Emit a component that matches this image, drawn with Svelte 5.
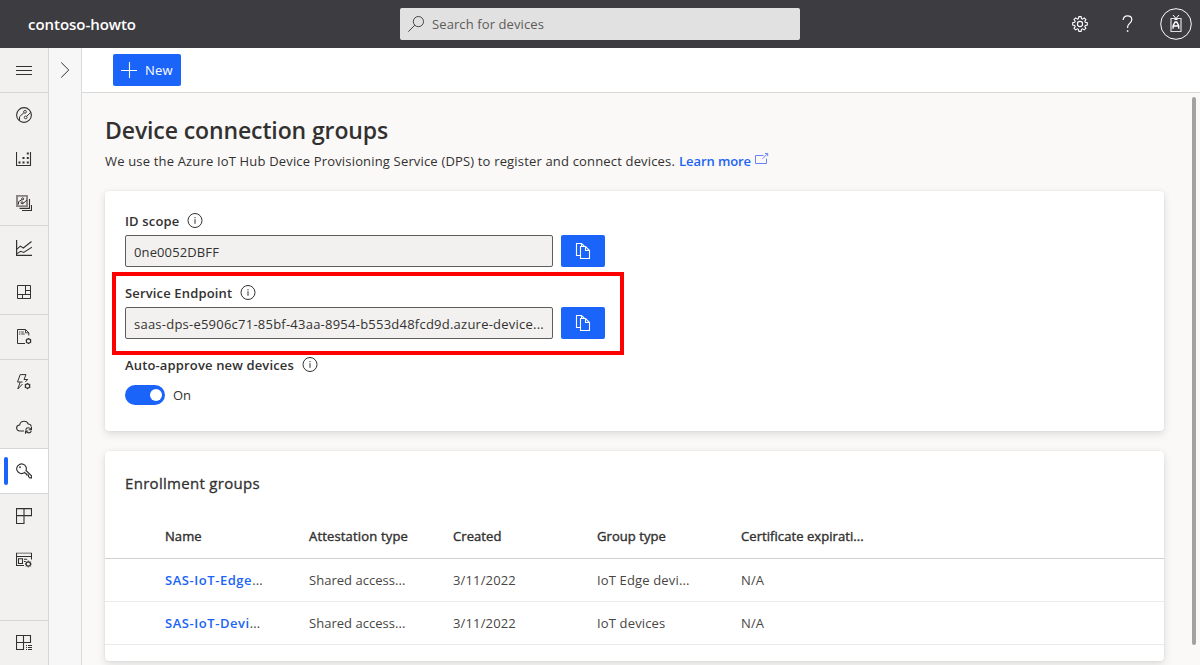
<script>
  const navGroups = [
    ['dashboards', 'devices', 'deviceGroups'],
    ['analytics', 'workbench'],
    ['file'],
    ['rules', 'cloud'],
    ['key'],
    ['app', 'customize']
  ];
  const active = 'key';
  const columns = ['Name', 'Attestation type', 'Created', 'Group type', 'Certificate expirati...'];
  const groups = [
    { name: 'SAS-IoT-Edge', cells: ['Shared access...', '3/11/2022', 'IoT Edge devi...', 'N/A'] },
    { name: 'SAS-IoT-Devi', cells: ['Shared access...', '3/11/2022', 'IoT devices', 'N/A'] }
  ];
</script>

{#snippet icon(name)}
  <svg class="icon" width="16" height="16" viewBox="0 0 16 16" fill="none" stroke="currentColor">
    {#if name === 'menu'}
      <path d="M0 4.5h16M0 8.5h16M0 12.5h16" />
    {:else if name === 'dashboards'}
      <circle cx="8" cy="8" r="7.4" stroke-width="1.1" />
      <path d="M3.5 13V9.8L6 7.4 7.8 6M10.8 9.2 15 5.2" />
      <circle cx="9" cy="4.8" r="1.4" stroke-width=".9" /><circle cx="9.7" cy="10.4" r="1.4" stroke-width=".9" />
    {:else if name === 'devices'}
      <path d="M.5 1v13.5h14V1" stroke-width="1.1" />
      <path d="M2.5 10.5h2v2h-2zM6.5 10.5h2v2h-2zM10.8 10.5h2v2h-2zM6.5 6h2v2h-2zM10.8 6h2v2h-2zM10.8 1.4h2v2h-2z" fill="currentColor" stroke="none" />
    {:else if name === 'deviceGroups'}
      <path d="M1 .9h10v10.2H1z" stroke="#85827f" stroke-width="1.9" />
      <path d="M2.5 9.5V6.8L6 4.5M6.5 9 11 5" />
      <circle cx="6.7" cy="3.8" r="1" /><circle cx="6" cy="7.7" r="1" />
      <path d="M13.5 4v9.4H3.5M15.5 10v5.5H6" stroke-width="1.1" />
    {:else if name === 'analytics'}
      <path d="M.6 0v15.4H16" stroke-width="1.2" />
      <path d="m1 8.5 3.3-3 3 1.9L15.5.9M1 13l3.7-2.3 3 1.1L16 6.6" stroke-width="1.1" transform="translate(0 .6)" />
    {:else if name === 'workbench'}
      <path d="M1.5 1.5h13v13h-13zM1.5 10.5h13M9.5 1.5v9M9.5 6.5h5M6.5 10.5v4" />
    {:else if name === 'file'}
      <path d="M9 14.5H1.5v-14H9.5l3.3 3.3v2.7" />
      <path d="M9.5.5v3.3h3.3M3 3h1.4M5.2 3h2.6M3 5h1.4M5.2 5h3.5" stroke-width=".9" />
      <circle cx="12.5" cy="12" r="2.2" stroke-width="1.2" />
      <path d="M12.5 9v1M12.5 14v1M9.9 10.5l.8.5M14.3 13l.8.5M9.9 13.5l.8-.5M14.3 11l.8-.5" />
    {:else if name === 'rules'}
      <path d="M8 .6H4.2L1.5 8h2.7l-2.4 7L6.5 10M8 .6h2L8 5.5h3.7L9.3 8M4.3 8h2.3" />
      <circle cx="11.5" cy="12" r="2.2" stroke-width="1.2" />
      <path d="M11.5 9v1M11.5 14v1.2M8.8 10.5l.8.5M13.3 13l1 .5M8.8 13.5l.8-.5M13.3 11l1-.5" />
    {:else if name === 'cloud'}
      <path d="M8 13H3.6A3 3 0 0 1 .6 10c0-1.8 1.2-2.9 3-3C4.2 4.7 5.8 3.3 8 3.3S11.7 4.4 12.2 6c1.7.1 2.8 1 3.2 2.6" stroke-width="1.1" />
      <path d="M9.7 11.8c.3-1.3 1.3-2 2.6-2 1.1 0 2 .5 2.5 1.5M15.5 9v2.7h-2.7M15.3 13c-.4 1.2-1.4 1.9-2.6 1.9s-2-.5-2.6-1.5M9.5 15.7V13h2.7" stroke-width="1.1" />
    {:else if name === 'key'}
      <path d="M8.8 9.2 9.5 10.5h1.2v1.3h1.8v1.6l1.3 1.3h1.7v-2L10 7.3A4.8 4.8 0 1 0 4 10.1a5 5 0 0 0 3.6-.2z" stroke-width="1.15" transform="translate(0 .2)" />
      <circle cx="4" cy="4.2" r=".7" fill="currentColor" stroke-width=".5" />
    {:else if name === 'app'}
      <path d="M.5.6h15v7H8v8H.5zM8 .6v7H.5" stroke-width="1.1" />
    {:else if name === 'customize'}
      <path d="M0 1.2h16" stroke="#93908e" stroke-width="1.4" />
      <path d="M15.5 7.5V1M.5 1v12.5H8M.5 4.5h15M2.5 6.8h4v4.7h-4zM8 7.3h3.2M8 9.5h1.5" stroke-width="1.1" />
      <circle cx="12.3" cy="12" r="2.2" stroke-width="1.2" />
      <path d="M12.3 8.6v1.2M12.3 14.2v1.2M8.9 12h1.2M14.5 12h1.2M9.9 9.6l.8.8M13.9 13.6l.8.8M9.9 14.4l.8-.8M13.9 10.4l.8-.8" />
    {:else if name === 'tiles'}
      <path d="M.5.5h14v7H.5zM7.5.5v14H.5v-14M10 10.5h1M12 10.5h4M10 12.5h1M12 12.5h4M10 14.5h1M12 14.5h4" stroke-width="1.1" />
    {:else if name === 'chevron'}
      <path d="m4.2.5 7.6 7.5-7.6 7.5" />
    {:else if name === 'plus'}
      <path d="M8.5 0v16M0 8.5h16" stroke-width="1.1" />
    {:else if name === 'search'}
      <circle cx="10.4" cy="5.6" r="5.1" /><path d="M6.8 9.2.3 15.7" />
    {:else if name === 'gear'}
      <circle cx="8" cy="8" r="2.6" stroke-width="1.1" />
      <path d="M6.9.6h2.2l.4 2 1.1.5 1.7-1.2 1.6 1.6-1.1 1.7.5 1.1 2 .5v2.3l-2 .4-.5 1.1 1.1 1.7-1.6 1.6-1.7-1.1-1.1.5-.4 2.1H6.9l-.5-2.1-1-.5-1.8 1.1L2 12.3l1.2-1.7-.5-1.1-2-.4V6.8l2-.5.5-1.1L2 3.5l1.6-1.6 1.8 1.2 1-.5z" stroke-width="1.1" />
    {:else if name === 'info'}
      <circle cx="8" cy="7.5" r="7" /><path d="M8 6.2v4.6M8 4v1.2" />
    {:else if name === 'copy'}
      <path d="M5.5 12.5h-4V.5h5l3 3M5.5 3.5h5l4 4v8h-9zM10.5 3.5v4h4M6.5.5v3" stroke-width="1.1" />
    {:else if name === 'external'}
      <path d="M9.5 4.5H1.5v8h11V7.5M8.5 7.8l5-5M11 2.5h2.7v2.7" />
    {/if}
  </svg>
{/snippet}

{#snippet field(label, value)}
  <div class="label">{label}{@render icon('info')}</div>
  <div class="copy-row">
    <div class="input">{value}</div>
    <button class="copy" aria-label="Copy">{@render icon('copy')}</button>
  </div>
{/snippet}

<div class="page">
  <header>
    <div class="brand">contoso-howto</div>
    <div class="search">{@render icon('search')}<span>Search for devices</span></div>
    <div class="actions">
      {@render icon('gear')}
      <svg class="help" width="12" height="18" viewBox="0 0 12 18" fill="none" stroke="currentColor">
        <path d="M1.2 4.9C1.2 2.5 3 .8 5.4.8c2.7 0 4.4 1.5 4.4 3.8 0 3.7-4.2 3.9-4.2 7.4v1" stroke-width="1.2" />
        <path d="M5.6 15.2v1.6" stroke-width="1.5" />
      </svg>
      <svg width="32" height="32" viewBox="0 0 32 32" fill="none" stroke="currentColor">
        <circle cx="16" cy="16" r="15.3" stroke-width="1" />
        <path d="M11 10.5h10v13H11z" stroke-width="1.2" stroke="#ddd" />
        <path d="m13 7 3 3.5L19 7M14.5 11.5h3" />
        <path d="M13.1 20.8v-3.1l2-3.7h1.6l2 3.7v3.1M13.1 18h5.6" stroke-width="1.4" />
      </svg>
    </div>
  </header>

  <div class="body">
    <nav>
      <div class="group"><div class="item">{@render icon('menu')}</div></div>
      {#each navGroups as names}
        <div class="group">
          {#each names as name}
            <div class="item" class:active={name === active}>{@render icon(name)}</div>
          {/each}
        </div>
      {/each}
      <div class="bottom"><div class="item">{@render icon('tiles')}</div></div>
    </nav>
    <aside>{@render icon('chevron')}</aside>

    <main>
      <div class="toolbar"><button class="new">{@render icon('plus')}<span>New</span></button></div>
      <div class="content">
        <h1>Device connection groups</h1>
        <p class="intro">
          <span>We use the Azure IoT Hub Device Provisioning Service (DPS) to register and connect devices.</span>
          <a href="#learn">Learn more</a>{@render icon('external')}
        </p>

        <section class="card settings">
          <div class="field">{@render field('ID scope', '0ne0052DBFF')}</div>
          <div class="field marked endpoint">
            {@render field('Service Endpoint', 'saas-dps-e5906c71-85bf-43aa-8954-b553d48fcd9d.azure-device...')}
          </div>
          <div class="label">Auto-approve new devices{@render icon('info')}</div>
          <div class="toggle-row"><span class="toggle"><i></i></span>On</div>
        </section>

        <section class="card enrollment">
          <h2>Enrollment groups</h2>
          <div class="row head">
            {#each columns as column}<span>{column}</span>{/each}
          </div>
          {#each groups as group}
            <div class="row">
              <span><a href="#group">{group.name}</a>...</span>
              {#each group.cells as cell}<span>{cell}</span>{/each}
            </div>
          {/each}
        </section>
      </div>
      <div class="scrollbar"></div>
    </main>
  </div>
</div>

<style>
  :global(body) { margin: 0; overflow: hidden; }
  .page {
    display: flex; flex-direction: column; height: 665px; overflow: hidden;
    font: 400 13px/20px "Open Sans", "Noto Sans", sans-serif; letter-spacing: .15px; color: #323130;
  }
  .page *, .page *::after { box-sizing: border-box; }
  .icon { flex: none; display: block; }
  button { border: 0; padding: 0; font: inherit; letter-spacing: inherit; color: #fff; background: #1b64fa; border-radius: 2px; }
  a { color: #1b64f5; font-weight: 600; text-decoration: none; }

  header {
    flex: none; height: 48px; display: grid; grid-template-columns: 400px 400px 1fr;
    align-items: center; background: #3d3c41; color: #fff;
  }
  .brand { padding-left: 28px; font-size: 15px; font-weight: 600; letter-spacing: -.04px; }
  .search {
    display: flex; align-items: center; gap: 8px; height: 32px; padding-left: 8px;
    background: #e1e1e1; color: #5d5b59; border-radius: 2px; letter-spacing: .1px;
  }
  .search .icon { color: #45434a; }
  .actions { display: flex; justify-content: flex-end; align-items: center; padding-right: 8px; }
  .help { margin: 0 26px 0 34px; }

  .body { flex: 1; min-height: 0; display: flex; }
  nav { width: 49px; display: flex; flex-direction: column; background: #f2f1ef; border-right: 1px solid #d6d6d6; color: #323130; }
  .group { border-bottom: 1px solid #d6d6d6; }
  .group:nth-last-child(2) { border: 0; }
  .item { height: 44px; display: flex; align-items: center; justify-content: center; }
  .bottom { margin-top: auto; border-top: 1px solid #d6d6d6; }
  .item.active { position: relative; background: #fff; }
  .item.active::before {
    content: ''; position: absolute; left: 4px; top: 8px; width: 4px; height: 28px; border-radius: 2px; background: #1b64fa;
  }
  aside { width: 33px; padding: 14px 0 0 8px; background: #f7f7f7; border-right: 1px solid #d9d9d9; }

  main { flex: 1; min-width: 0; position: relative; display: flex; flex-direction: column; background: #faf9f8; }
  .toolbar { flex: none; height: 45px; padding: 6px 31px; background: #fff; border-bottom: 1px solid #d9d9d9; }
  .new { display: flex; align-items: center; gap: 8px; width: 68px; height: 32px; padding-left: 8px; letter-spacing: .25px; }
  .content { flex: 1; min-height: 0; overflow: hidden; padding: 21px 36px 0 23px; }
  h1 { margin: 0; font-size: 23px; line-height: 32px; font-weight: 600; letter-spacing: -.11px; }
  .intro { display: flex; align-items: center; margin: 5px 0 20px; }
  .intro span { letter-spacing: .168px; margin-right: 4px; }
  .intro a { letter-spacing: -.08px; }
  .intro .icon { color: #6a83f8; margin: -4px 0 0 3px; }

  .card { background: #fff; border-radius: 4px; box-shadow: 0 3px 8px rgba(0, 0, 0, .12), 0 0 2px rgba(0, 0, 0, .08); }
  .settings { height: 240px; padding: 20px; }
  .field { position: relative; height: 72px; }
  .label { display: flex; align-items: center; gap: 8px; height: 20px; font-weight: 600; }
  .copy-row { display: flex; gap: 8px; padding-top: 4px; }
  .input {
    width: 428px; height: 32px; padding: 1px 0 0 8px; line-height: 30px; letter-spacing: .12px; white-space: nowrap;
    background: #f2f1f0; border: 1px solid #605e5c; border-radius: 2px;
  }
  .endpoint .input { letter-spacing: .234px; }
  .copy { display: grid; place-items: center; width: 44px; height: 32px; }
  .marked::after { content: ''; position: absolute; left: -13px; top: -11px; width: 512px; height: 83px; border: 4px solid #fe0000; }
  .toggle-row { display: flex; align-items: center; gap: 8px; margin-top: 10px; letter-spacing: 0; }
  .toggle { display: flex; justify-content: flex-end; align-items: center; width: 40px; height: 20px; padding-right: 3px; border-radius: 10px; background: #1b64fa; }
  .toggle i { width: 12px; height: 12px; border-radius: 50%; background: #fff; }

  .enrollment { height: 210px; margin-top: 20px; padding-top: 21px; }
  h2 { margin: 0 0 11px 20px; font-size: 15px; line-height: 22px; font-weight: 400; letter-spacing: .3px; -webkit-text-stroke: .3px; }
  .row { display: grid; grid-template-columns: repeat(5, 144px); height: 43px; padding-left: 60px; align-items: center; border-bottom: 1px solid #edebe9; white-space: nowrap; color: #484644; }
  .row span:nth-child(2) { letter-spacing: .03px; }
  .row a { letter-spacing: .55px; }
  .head { height: 54px; padding-top: 8px; border-color: #d2d0ce; letter-spacing: .07px; color: #323130; -webkit-text-stroke: .4px; }
  .head span:nth-child(2) { letter-spacing: .167px; }
  .scrollbar { position: absolute; right: 4px; top: 49px; width: 4px; height: 548px; border-radius: 2px; background: #a3a2a1; }
</style>
